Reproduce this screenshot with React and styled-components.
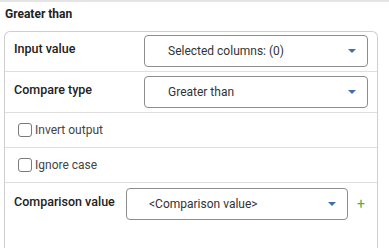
import React from 'react';
import styled, { createGlobalStyle } from 'styled-components';

const GlobalStyle = createGlobalStyle`
    html, body {
        margin: 0;
        padding: 0;
        background: #ffffff;
        font-family: Roboto, "Liberation Sans", sans-serif;
    }
`;

const Page = styled.div`
    width: 389px;
    height: 248px;
    overflow: hidden;
    border-top: 2px solid #e4e4e4;
    box-sizing: border-box;
`;

const Title = styled.div`
    height: 29px;
    padding-left: 5px;
    font-size: 12px;
    font-weight: 700;
    color: #222;
    display: flex;
    align-items: center;
    padding-bottom: 6px;
    box-sizing: border-box;
`;

const Panel = styled.div`
    margin-left: 4px;
    width: 374px;
    height: 217px;
    box-sizing: border-box;
    border: 1px solid #cfcfcf;
    border-bottom: none;
    border-radius: 6px 6px 0 0;
`;

const Row = styled.div`
    display: flex;
    align-items: center;
    padding: ${p => p.$check ? '0 9px 0 13px' : '3px 9px 4px 9px'};
    min-height: ${p => p.$check ? '34px' : 'auto'};
    border-bottom: ${p => p.$last ? 'none' : '1px solid #dedede'};
    &:nth-child(2) {
        padding-top: 4px;
    }
    &:nth-child(3) {
        min-height: 34px;
    }
`;

const Label = styled.div`
    flex: ${p => p.$w ? `0 0 ${p.$w}px` : '0 0 auto'};
    align-self: flex-start;
    padding-top: 6px;
    font-size: 12.5px;
    font-weight: 500;
    color: #222;
`;

const Select = styled.div`
    flex: 1;
    height: 32px;
    box-sizing: border-box;
    border: 1px solid #8d8d8d;
    border-radius: 4px;
    display: flex;
    align-items: center;
    padding-left: ${p => p.$pad || 23}px;
    padding-right: 11px;
    font-size: 12px;
    color: #333;
`;

const SelectText = styled.span`
    flex: 1;
`;

const Caret = styled.span`
    width: 0;
    height: 0;
    border-left: 4px solid transparent;
    border-right: 4px solid transparent;
    border-top: 4px solid #3f6db3;
`;

const Box = styled.span`
    width: 14px;
    height: 14px;
    box-sizing: border-box;
    border: 1px solid #7a7a7a;
    border-radius: 3px;
    margin-right: 3px;
`;

const CheckText = styled.span`
    font-size: 12px;
    color: #444;
`;

const Plus = styled.span`
    margin-left: 7px;
    width: 12px;
    text-align: center;
    font-size: 14px;
    color: #4caf50;
    line-height: 1;
`;

const App = () => {
    return (
        <Page>
            <GlobalStyle />
            <Title>Greater than</Title>
            <Panel>
                <Row>
                    <Label $w={130}>Input value</Label>
                    <Select>
                        <SelectText>Selected columns: (0)</SelectText>
                        <Caret />
                    </Select>
                </Row>
                <Row>
                    <Label $w={130}>Compare type</Label>
                    <Select>
                        <SelectText>Greater than</SelectText>
                        <Caret />
                    </Select>
                </Row>
                <Row $check>
                    <Box />
                    <CheckText>Invert output</CheckText>
                </Row>
                <Row $check>
                    <Box />
                    <CheckText>Ignore case</CheckText>
                </Row>
                <Row $last style={{ paddingRight: '10px', paddingTop: '5px' }}>
                    <Label $w={112}>Comparison value</Label>
                    <Select $pad={22}>
                        <SelectText>&lt;Comparison value&gt;</SelectText>
                        <Caret />
                    </Select>
                    <Plus>+</Plus>
                </Row>
            </Panel>
        </Page>
    );
};

export default App;
